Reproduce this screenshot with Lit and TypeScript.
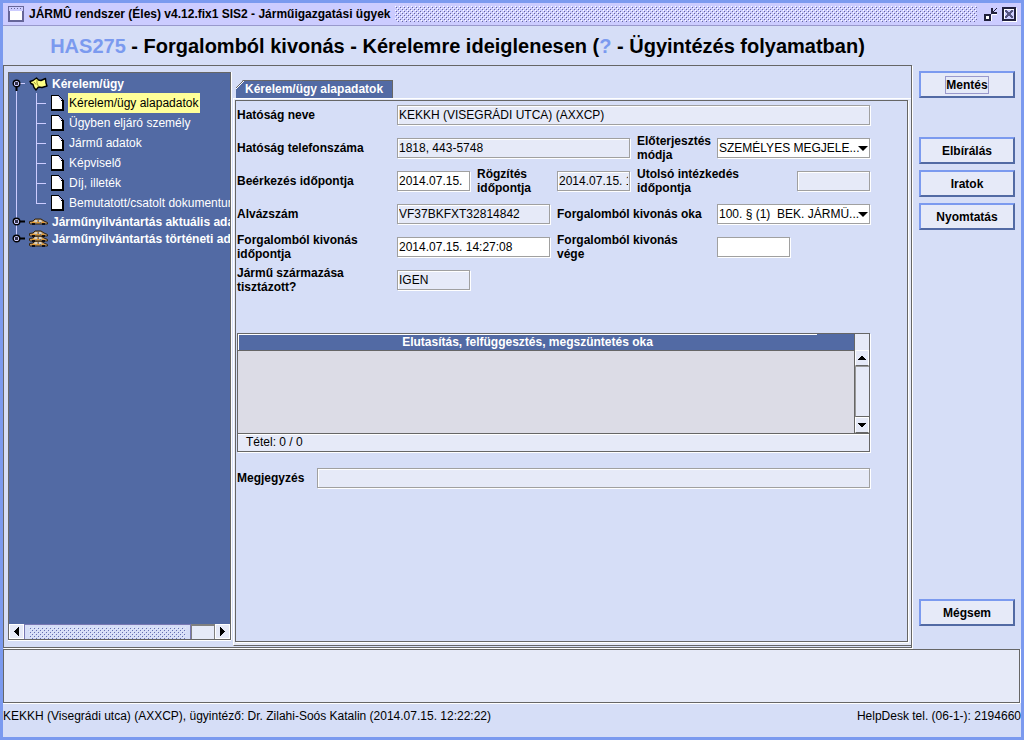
import { LitElement, html, css, svg, nothing } from "lit";
import { customElement } from "lit/decorators.js";

type FieldKind = "text" | "readonly" | "select";
interface Field {
  id: string;
  label: string;
  kind: FieldKind;
  value: string;
  labelSpan: string;
  fieldSpan: string;
}

const FIELDS: Field[] = [
  { id: "hatosag", label: "Hatóság neve", kind: "readonly", value: "KEKKH (VISEGRÁDI UTCA) (AXXCP)", labelSpan: "s2", fieldSpan: "s6" },
  { id: "telefon", label: "Hatóság telefonszáma", kind: "readonly", value: "1818, 443-5748", labelSpan: "s2", fieldSpan: "s3" },
  { id: "modja", label: "Előterjesztés\nmódja", kind: "select", value: "SZEMÉLYES MEGJELE...", labelSpan: "s1", fieldSpan: "s2" },
  { id: "beerkezes", label: "Beérkezés időpontja", kind: "text", value: "2014.07.15.", labelSpan: "s2", fieldSpan: "s1" },
  { id: "rogzites", label: "Rögzítés\nidőpontja", kind: "readonly", value: "2014.07.15. 14:27:08", labelSpan: "s1", fieldSpan: "s1" },
  { id: "utolso", label: "Utolsó intézkedés\nidőpontja", kind: "readonly", value: "", labelSpan: "s2", fieldSpan: "s1" },
  { id: "alvaz", label: "Alvázszám", kind: "readonly", value: "VF37BKFXT32814842", labelSpan: "s2", fieldSpan: "s2" },
  { id: "oka", label: "Forgalomból kivonás oka", kind: "select", value: "100. § (1)\u00a0 BEK. JÁRMŰ...", labelSpan: "s2", fieldSpan: "s2" },
  { id: "kivonas", label: "Forgalomból kivonás\nidőpontja", kind: "text", value: "2014.07.15. 14:27:08", labelSpan: "s2", fieldSpan: "s2" },
  { id: "vege", label: "Forgalomból kivonás\nvége", kind: "text", value: "", labelSpan: "s2", fieldSpan: "s1" },
  { id: "szarmazas", label: "Jármű származása\ntisztázott?", kind: "readonly", value: "IGEN", labelSpan: "s2", fieldSpan: "s1" },
];

const LEAVES = [
  "Kérelem/ügy alapadatok",
  "Ügyben eljáró személy",
  "Jármű adatok",
  "Képviselő",
  "Díj, illeték",
  "Bemutatott/csatolt dokumentumok",
];

const arrow = (dir: "left" | "right" | "up" | "down") => {
  const d = {
    left: "M6 0h1v9h-1v-1h-1v-1h-1v-1h-1v-1h-1v-1h1v-1h1v-1h1v-1h1z",
    right: "M3 0h-1v9h1v-1h1v-1h1v-1h1v-1h1v-1h-1v-1h-1v-1h-1v-1h-1z",
    up: "M4 2h1v1h1v1h1v1h1v1h-8v-1h1v-1h1v-1h1v-1z",
    down: "M0 2h8v1h-1v1h-1v1h-1v1h-2v-1h-1v-1h-1v-1h-1z",
  }[dir];
  return html`<svg width="9" height="9" viewBox="0 0 9 9" shape-rendering="crispEdges" aria-hidden="true"><path d=${d} /></svg>`;
};

const handle = (open: boolean) => html`<svg class="handle" width="16" height="16" viewBox="0 0 16 16" aria-hidden="true">
  <path d=${open ? "M4.500 8V15" : "M8 7.500H13"} stroke="#000" stroke-width="2" />
  ${open ? svg`<path d="M8 7.500H13" stroke="#ccccff" />` : nothing}
  <circle cx="4.500" cy="7.500" r="3.300" fill="#ccccff" stroke="#000" stroke-width="1.400" />
  <rect x="3" y="6" width="3" height="3" fill="#33334c" />
</svg>`;

const folder = html`<svg width="19" height="14" viewBox="0 0 19 14" aria-hidden="true">
  <path d="M1 4.500L4 3.500L7.500 1L9.500 3L12 3.500L16.500 1.500L17 6L18 9L13 10.500L9.500 10L7 13L5 10.500L4 7.500L2 6.500Z" fill="#ffff84" stroke="#000" stroke-width="1.400" stroke-linejoin="round" />
  <path d="M8 2.500L8 6L9.500 9.500M5 5L7 7.500" fill="none" stroke="#a09c30" />
</svg>`;

const page = html`<svg width="13" height="16" viewBox="0 0 13 16" shape-rendering="crispEdges" aria-hidden="true">
  <path d="M1 1H8L12 5V15H1Z" fill="#fff" />
  <path d="M0 0H8V1H9V2H10V3H11V4H12V5H13V16H0ZM1 1V14H11V6H10V5H9V4H8V2H7V1Z" fill="#000" fill-rule="evenodd" />
  <path d="M7 1h1v1h1v1h1v1h1v1h-2v-1h-1v-2h-1z" fill="#ccccff" />
</svg>`;

const carShape = (y: number) => svg`<g transform="translate(0 ${y})">
  <path d="M0.500 5.500V3.500L4 3L6 1H12L15 3L18.500 4.500V6H1Z" fill="#c09868" stroke="#33240f" stroke-width="1" />
  <path d="M6 2H8V4H5ZM10 2H12L13 4H10Z" fill="#d8d0bc" />
  <path d="M3 4h3v1h-3zM8 4h2v1h-2zM13 4h2v1h-2z" fill="#e89820" />
  <path d="M3 5h3v2h-3zM13 5h3v2h-3z" fill="#101018" />
  <path d="M9 2h1v2h-1zM11 4h1v1h-1z" fill="#707078" />
</g>`;
const car = html`<svg width="19" height="9" viewBox="0 0 19 9" aria-hidden="true">${carShape(1)}</svg>`;
const cars = html`<svg width="19" height="17" viewBox="0 0 19 17" aria-hidden="true">${carShape(10)}${carShape(5)}${carShape(0)}</svg>`;

const bumps = (id: string, light: string, dark: string) => html`<svg class="bumps" width="100%" height="100%" shape-rendering="crispEdges" aria-hidden="true">
  <defs><pattern id=${id} width="4" height="4" patternUnits="userSpaceOnUse">
    <path d="M0 0h1v1h-1zM2 2h1v1h-1z" fill=${light} />
    <path d="M1 1h1v1h-1zM3 3h1v1h-1z" fill=${dark} />
  </pattern></defs>
  <rect width="100%" height="100%" fill="url(#${id})" />
</svg>`;

@customElement("app-root")
export class AppRoot extends LitElement {
  static styles = css`
    :host {
      --frame: #7b9aef;
      --bg: #d6def7;
      --light: #e6eaf8;
      --navy: #526aa4;
      --line: #666666;
      display: block;
      font: 12px/14px "Liberation Sans", Arial, sans-serif;
      color: #000;
    }
    *, *::before, *::after { box-sizing: border-box; }
    svg { display: block; flex: none; }
    button, input, select { font: inherit; color: inherit; margin: 0; border-radius: 0; }
    .window {
      min-height: 100vh;
      display: flex;
      flex-direction: column;
      border: 3px solid var(--frame);
      background: var(--bg);
    }
    .titlebar {
      height: 23px;
      flex: none;
      display: flex;
      align-items: center;
      gap: 5px;
      padding: 0 4px 0 5px;
      background: #ccccff;
      border-bottom: 1px solid #9999cc;
      font-weight: bold;
    }
    .caption { white-space: nowrap; line-height: 16px; }
    .grip { flex: 1; height: 16px; min-width: 0; }
    .winbtns { display: flex; gap: 4px; padding-left: 1px; }
    .winbtn { border: 0; padding: 0; background: none; }
    .body { flex: 1; display: grid; grid-template-columns: minmax(0, 1fr) 109px; }
    .left { display: flex; flex-direction: column; min-width: 0; }
    .heading {
      margin: 0;
      height: 39px;
      font-size: 20px;
      line-height: 41px;
      font-weight: bold;
      text-align: center;
      white-space: nowrap;
    }
    .accent { color: var(--frame); }
    .split {
      flex: 1;
      display: grid;
      grid-template-columns: 223px minmax(0, 1fr);
      gap: 2px;
      padding: 6px 0 1px 4px;
      border: 1px solid var(--line);
      box-shadow: 1px 1px #fff;
    }
    .treebox {
      display: flex;
      flex-direction: column;
      margin-bottom: 6px;
      border: 1px solid var(--line);
      box-shadow: 0 1px #fff, 1px 0 #fff;
      background: var(--navy);
      min-width: 0;
      overflow: hidden;
    }
    .tree { flex: 1; color: #fff; white-space: nowrap; overflow: hidden; }
    ul { list-style: none; margin: 0; padding: 0; }
    .roots { position: relative; padding-top: 1px; }
    .roots::before {
      content: "";
      position: absolute;
      left: 7px;
      top: 14px;
      bottom: 9px;
      width: 1px;
      background: #ccccff;
    }
    .node { position: relative; display: flex; align-items: center; height: 17px; padding-left: 3px; gap: 1px; font-weight: bold; }
    .node.open { height: 19px; }
    .nodeicon { width: 19px; margin-right: 3px; }
    .leaves { padding-left: 27px; }
    .leaf { position: relative; display: flex; align-items: center; height: 20px; padding-left: 15px; gap: 4px; }
    .leaf::before {
      content: "";
      position: absolute;
      left: 0;
      top: 0;
      width: 10px;
      height: 11px;
      border-left: 1px solid #ccccff;
      border-bottom: 1px solid #ccccff;
    }
    .leaf:not(:last-child)::after {
      content: "";
      position: absolute;
      left: 0;
      top: 10px;
      bottom: 0;
      width: 1px;
      background: #ccccff;
    }
    .leaftext { height: 20px; line-height: 21px; padding: 0 2px 0 1px; }
    .selected { background: #ffff99; color: #000; }
    .scrollbtn {
      display: grid;
      place-items: center;
      padding: 0;
      border: 1px solid #fff;
      background: var(--light);
      width: 15px;
      height: 15px;
    }
    .hscroll { display: grid; grid-template-columns: 15px 167px 1fr 15px; height: 15px; background: var(--light); }
    .hthumb { border: 1px solid #7878b4; padding: 2px 4px; background: var(--bg); min-width: 0; }
    .htrack { border: 1px solid #808080; border-width: 2px 1px 0; }
    .tabs { display: flex; flex-direction: column; min-width: 0; padding-top: 8px; }
    .tablist { display: flex; padding-left: 3px; }
    .tab {
      height: 18px;
      padding: 0 10px 0 9px;
      border: 0;
      line-height: 18px;
      background: linear-gradient(135deg, var(--bg) 5px, var(--line) 5px, var(--line) 6px, #fff 6px, #fff 7px, var(--navy) 7px);
      box-shadow: inset -1px 0 var(--line), inset 0 1px var(--line);
      color: #fff;
      font-weight: bold;
      clip-path: polygon(7px 0, 100% 0, 100% 100%, 0 100%, 0 7px);
    }
    .pane {
      flex: 1;
      display: flex;
      border: 1px solid #fff;
      border-bottom-color: var(--line);
      border-right: 0;
      padding: 1px 3px 3px 1px;
      background: var(--light);
    }
    .form { flex: 1; min-width: 0; border: 1px solid var(--line); padding: 0 36px 0 1px; box-shadow: 1px 1px #fff; background: var(--bg); }
    .fields { display: grid; grid-template-columns: repeat(8, minmax(0, 1fr)); column-gap: 6px; row-gap: 5px; grid-auto-rows: 28px; align-items: center; }
    .s1 { grid-column: span 1; }
    .s2 { grid-column: span 2; }
    .s3 { grid-column: span 3; }
    .s6 { grid-column: span 6; }
    label { font-weight: bold; white-space: pre; }
    .field {
      width: calc(100% - 1px);
      height: 20px;
      padding: 0 1px;
      border: 1px solid #a0a0a0;
      background: #fff;
      box-shadow: 1px 1px #fff;
      outline: 0;
      min-width: 0;
    }
    .field[readonly] { background: var(--light); box-shadow: 1px 1px #fff, inset 1px 1px #fff; }
    .combo { display: grid; align-items: center; }
    .combo > * { grid-area: 1 / 1; }
    .combo select { appearance: none; }
    .combo svg { justify-self: end; margin-right: 3px; pointer-events: none; }
    .tablebox { margin: 39px 1px 0 0; border: 1px solid var(--line); box-shadow: 1px 1px #fff; background: #dcdce6; }
    .gridbox { display: grid; grid-template-columns: minmax(0, 1fr) 15px; }
    .data { width: 100%; border-collapse: collapse; align-self: start; }
    .data th { height: 16px; padding: 0; background: var(--navy); color: #fff; border-bottom: 1px solid var(--line); }
    .data .colhead { box-shadow: inset 1px 1px #fff, 1px 0 var(--line); }
    .data .rest { width: 37px; }
    .vscroll { display: grid; grid-template-rows: 16px 16px 1fr 16px; height: 99px; background: var(--light); border-left: 1px solid var(--line); }
    .vscroll .scrollbtn { width: auto; height: auto; border-bottom: 1px solid var(--line); }
    .vtrack { border: solid #999; border-width: 1px 0 1px 1px; border-bottom-color: var(--line); }
    .count { height: 18px; padding: 0 8px; line-height: 17px; background: var(--light); border-top: 1px solid var(--line); box-shadow: inset 0 1px #fff; }
    .note { display: grid; grid-template-columns: 80px minmax(0, 1fr); align-items: center; margin-top: 16px; }
    .actions { display: flex; flex-direction: column; gap: 6px; padding: 45px 6px 22px 7px; }
    .action {
      height: 27px;
      padding: 0;
      background: var(--light);
      border: 2px solid var(--frame);
      border-right-color: var(--navy);
      border-bottom-color: var(--navy);
      font-weight: bold;
    }
    .first { margin-bottom: 33px; }
    .lastaction { margin-top: auto; }
    .focus { display: inline-block; line-height: 16px; border: 1px solid #9999cc; }
    .message { height: 54px; flex: none; margin: 1px 1px 0 0; background: var(--light); border: 1px solid var(--line); box-shadow: 0 1px #fff, 1px 0 #fff; }
    .status { height: 34px; flex: none; display: flex; justify-content: space-between; padding-top: 6px; white-space: nowrap; }
  `;

  private control(f: Field) {
    if (f.kind === "select") {
      return html`<div class="combo ${f.fieldSpan}">
        <select class="field" id=${f.id}><option>${f.value}</option></select>
        <svg width="10" height="5" viewBox="0 0 10 5" aria-hidden="true"><path d="M0 0H10L5 5Z" /></svg>
      </div>`;
    }
    return html`<div class=${f.fieldSpan}>
      <input class="field" id=${f.id} type="text" .value=${f.value} ?readonly=${f.kind === "readonly"} />
    </div>`;
  }

  render() {
    return html`<div class="window">
      <header class="titlebar">
        <svg width="16" height="16" viewBox="0 0 16 16" shape-rendering="crispEdges" aria-hidden="true">
          <rect x="0" y="0" width="16" height="16" rx="1" fill="#666699" />
          <rect x="1" y="1" width="14" height="4" fill="#ccccff" />
          <path d="M3 2h1v1h-1zM6 2h1v1h-1zM9 2h1v1h-1zM12 2h1v1h-1z" fill="#666699" />
          <rect x="2" y="5" width="12" height="9" fill="#fff" />
        </svg>
        <span class="caption">JÁRMÛ rendszer (Éles) v4.12.fix1 SIS2 - Járműigazgatási ügyek</span>
        <div class="grip">${bumps("titleBumps", "#ffffff", "#666699")}</div>
        <div class="winbtns">
          <button class="winbtn" aria-label="Visszaállítás">
            <svg width="15" height="15" viewBox="0 0 15 15" shape-rendering="crispEdges" aria-hidden="true">
              <path d="M2 14h7v-6h-1v6z" fill="#fff" /><path d="M1 7h7v7h-7z" fill="#20203c" /><path d="M3 9h3v3h-3z" fill="#fff" />
              <path d="M8 8h6v-1h-5z" fill="#fff" />
              <path d="M8 1h2v3h1v-1h1v-1h1v-1h1v1h-1v1h-1v1h-1v1h3v2h-6z" fill="#20203c" />
            </svg>
          </button>
          <button class="winbtn" aria-label="Bezárás">
            <svg width="15" height="15" viewBox="0 0 15 15" shape-rendering="crispEdges" aria-hidden="true">
              <path d="M0 0h14v14h-14z" fill="#20203c" /><path d="M14 1h1v14h-14v-1h13z" fill="#fff" />
              <path d="M2 2h10v10h-10z" fill="#ccccff" /><path d="M2 2h10v1h-9v9h-1z" fill="#fff" />
              <path d="M3 3h2v1h1v1h2v-1h1v-1h2v2h-1v1h-1v2h1v1h1v2h-2v-1h-1v-1h-2v1h-1v1h-2v-2h1v-1h1v-2h-1v-1h-1z" fill="#555580" />
            </svg>
          </button>
        </div>
      </header>

      <main class="body">
        <div class="left">
          <h1 class="heading"><span class="accent">HAS275</span> - Forgalomból kivonás - Kérelemre ideiglenesen (<span class="accent">?</span> - Ügyintézés folyamatban)</h1>
          <div class="split">
            <nav class="treebox">
              <div class="tree">
                <ul class="roots">
                  <li>
                    <div class="node open">${handle(true)}<span class="nodeicon">${folder}</span>Kérelem/ügy</div>
                    <ul class="leaves">
                      ${LEAVES.map((t, i) => html`<li class="leaf">${page}<span class="leaftext ${i === 0 ? "selected" : ""}">${t}</span></li>`)}
                    </ul>
                  </li>
                  <li class="node">${handle(false)}<span class="nodeicon">${car}</span>Járműnyilvántartás aktuális adatai</li>
                  <li class="node">${handle(false)}<span class="nodeicon">${cars}</span>Járműnyilvántartás történeti adatai</li>
                </ul>
              </div>
              <div class="hscroll">
                <button class="scrollbtn" aria-label="Balra">${arrow("left")}</button>
                <div class="hthumb">${bumps("scrollBumps", "#e6eaf8", "#6670b0")}</div>
                <div class="htrack"></div>
                <button class="scrollbtn" aria-label="Jobbra">${arrow("right")}</button>
              </div>
            </nav>

            <section class="tabs">
              <div class="tablist" role="tablist"><button class="tab" role="tab" aria-selected="true">Kérelem/ügy alapadatok</button></div>
              <div class="pane">
                <div class="form">
                  <div class="fields">
                    ${FIELDS.map((f) => html`<label class=${f.labelSpan} for=${f.id}>${f.label}</label>${this.control(f)}${f.id === "vege" ? html`<span class="s1"></span>` : nothing}`)}
                  </div>
                  <div class="tablebox">
                    <div class="gridbox">
                      <table class="data">
                        <thead><tr><th class="colhead" scope="col">Elutasítás, felfüggesztés, megszüntetés oka</th><th class="rest"></th></tr></thead>
                      </table>
                      <div class="vscroll">
                        <div></div>
                        <button class="scrollbtn" aria-label="Fel">${arrow("up")}</button>
                        <div class="vtrack"></div>
                        <button class="scrollbtn" aria-label="Le">${arrow("down")}</button>
                      </div>
                    </div>
                    <div class="count">Tétel: 0 / 0</div>
                  </div>
                  <div class="note">
                    <label for="megjegyzes">Megjegyzés</label>
                    <input class="field" id="megjegyzes" type="text" readonly />
                  </div>
                </div>
              </div>
            </section>
          </div>
        </div>
        <aside class="actions">
          <button class="action first"><span class="focus">Mentés</span></button>
          <button class="action">Elbírálás</button>
          <button class="action">Iratok</button>
          <button class="action">Nyomtatás</button>
          <button class="action lastaction">Mégsem</button>
        </aside>
      </main>

      <div class="message" role="status"></div>
      <footer class="status">
        <span>KEKKH (Visegrádi utca) (AXXCP), ügyintéző: Dr. Zilahi-Soós Katalin (2014.07.15. 12:22:22)</span>
        <span>HelpDesk tel. (06-1-): 2194660</span>
      </footer>
    </div>`;
  }
}
